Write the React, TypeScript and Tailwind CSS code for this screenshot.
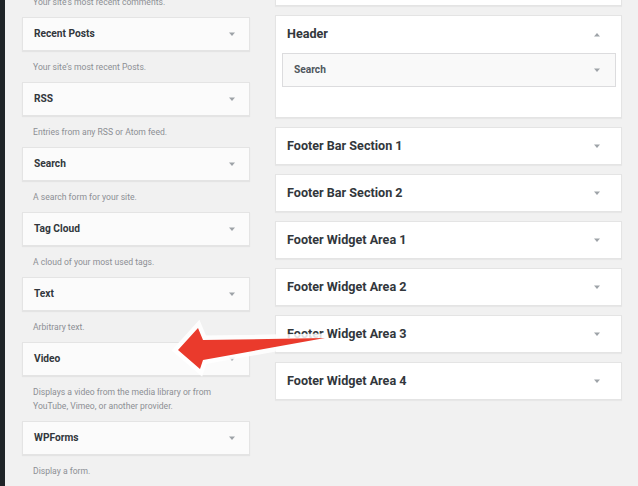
import React from "react";

const font = { fontFamily: "Roboto, 'Liberation Sans', Arial, sans-serif" };

function Caret({ up = false }: { up?: boolean }) {
  return (
    <svg width="6" height="4" viewBox="0 0 6 4" className="shrink-0">
      {up ? (
        <polygon points="0,3.5 6,3.5 3,0" fill="#9ea3a8" />
      ) : (
        <polygon points="0,0.5 6,0.5 3,4" fill="#9ea3a8" />
      )}
    </svg>
  );
}

type Widget = { title: string; desc: string[] };

const widgets: Widget[] = [
  { title: "Recent Posts", desc: ["Your site\u2019s most recent Posts."] },
  { title: "RSS", desc: ["Entries from any RSS or Atom feed."] },
  { title: "Search", desc: ["A search form for your site."] },
  { title: "Tag Cloud", desc: ["A cloud of your most used tags."] },
  { title: "Text", desc: ["Arbitrary text."] },
  {
    title: "Video",
    desc: [
      "Displays a video from the media library or from",
      "YouTube, Vimeo, or another provider.",
    ],
  },
  { title: "WPForms", desc: ["Display a form."] },
];

function Desc({ lines }: { lines: string[] }) {
  return (
    <div className="pl-[11px] pt-[9px] pb-[8px] text-[8.6px] leading-[14px] text-[#8c8f94]">
      {lines.map((l) => (
        <div key={l}>{l}</div>
      ))}
    </div>
  );
}

const areas = [
  "Footer Bar Section 1",
  "Footer Bar Section 2",
  "Footer Widget Area 1",
  "Footer Widget Area 2",
  "Footer Widget Area 3",
  "Footer Widget Area 4",
];

export default function App() {
  return (
    <div
      className="relative flex h-[486px] w-[638px] overflow-hidden bg-[#f1f1f1]"
      style={font}
    >
      <div className="h-full w-[5px] shrink-0 bg-[#1f2428]" />

      {/* Left: available widgets */}
      <div className="ml-[17px] mt-[-14px] flex w-[228px] shrink-0 flex-col">
        <Desc lines={["Your site\u2019s most recent comments."]} />
        {widgets.map((w) => (
          <div key={w.title} className="flex flex-col">
            <div className="flex h-[34px] items-center justify-between border border-[#e4e4e4] bg-[#fbfbfb] pl-[11px] pr-[14px] shadow-[0_1px_1px_rgba(0,0,0,0.05)]">
              <span className="text-[10.2px] font-bold text-[#32373c]">{w.title}</span>
              <Caret />
            </div>
            <Desc lines={w.desc} />
          </div>
        ))}
      </div>

      {/* Right: widget areas */}
      <div className="ml-[25px] mt-[-30px] flex w-[347px] shrink-0 flex-col gap-[9px]">
        <div className="h-[36px] border border-[#e4e4e4] bg-white shadow-[0_1px_1px_rgba(0,0,0,0.04)]" />
        <div className="flex h-[103px] flex-col border border-[#e4e4e4] bg-white shadow-[0_1px_1px_rgba(0,0,0,0.04)]">
          <div className="flex h-[37px] items-center justify-between pl-[11px] pr-[21px]">
            <span className="text-[12.6px] font-bold text-[#32373c]">Header</span>
            <Caret up />
          </div>
          <div className="ml-[6px] mr-[5px] flex h-[34px] items-center justify-between border border-[#dcdcde] bg-[#f9f9f9] pl-[11px] pr-[15px]">
            <span className="text-[10.2px] font-bold text-[#50575e]">Search</span>
            <Caret />
          </div>
        </div>
        {areas.map((a) => (
          <div
            key={a}
            className="flex h-[38px] items-center justify-between border border-[#e4e4e4] bg-white pl-[11px] pr-[21px] shadow-[0_1px_1px_rgba(0,0,0,0.04)]"
          >
            <span className="text-[12.6px] font-bold text-[#32373c]">{a}</span>
            <Caret />
          </div>
        ))}
      </div>

      {/* Red annotation arrow */}
      <svg
        className="pointer-events-none absolute left-0 top-0"
        width="638"
        height="486"
        viewBox="0 0 638 486"
      >
        <polygon
          points="178,350 198,328 203,340 325,338 203,360 200,369"
          fill="#ffffff"
          fillOpacity="0.85"
          stroke="#ffffff"
          strokeOpacity="0.85"
          strokeWidth="9"
          strokeLinejoin="miter"
          strokeMiterlimit="4"
        />
        <polygon
          points="178,350 198,328 203,340 325,338 203,360 200,369"
          fill="#ea3a2c"
        />
      </svg>
    </div>
  );
}
